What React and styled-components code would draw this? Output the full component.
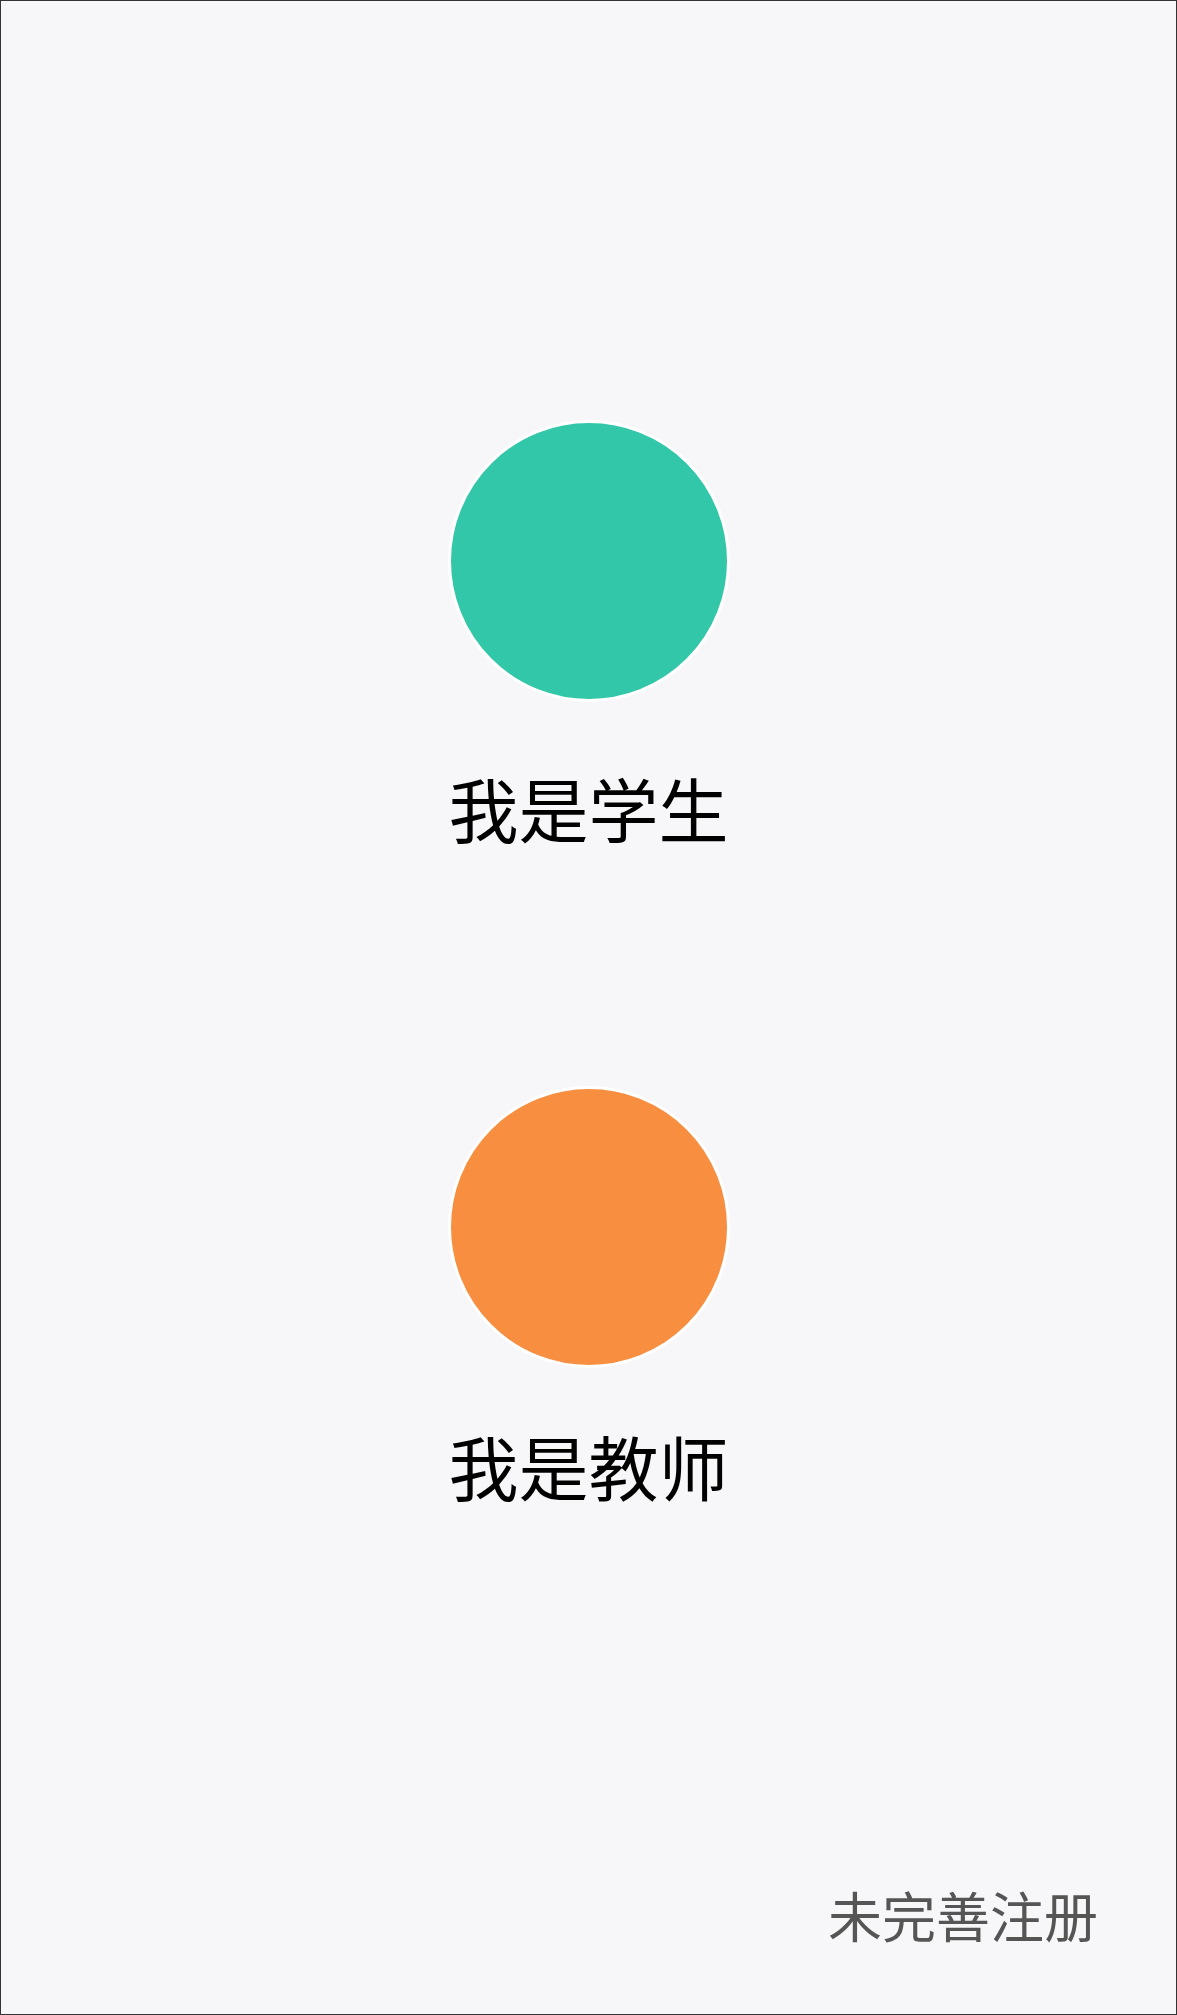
import React from "react";
import styled, { createGlobalStyle } from "styled-components";

const Global = createGlobalStyle`
  html, body { margin: 0; padding: 0; background: #f7f7fa; }
  * { box-sizing: border-box; }
`;

const Page = styled.div`
  width: 1177px;
  height: 2015px;
  border: 1px solid #333;
  background: #f7f7fa;
  display: flex;
  flex-direction: column;
  align-items: center;
  padding-top: 419px;
  font-family: "Noto Sans CJK SC", "Noto Sans", sans-serif;
`;

const Role = styled.div`
  display: flex;
  flex-direction: column;
  align-items: center;
  gap: ${(p) => p.$gap}px;
  & + & { margin-top: 243px; }
  cursor: pointer;
`;

const Circle = styled.div`
  width: 282px;
  height: 282px;
  border-radius: 50%;
  border: 3px solid #ffffff;
  background: ${(p) => p.$color};
`;

const Label = styled.div`
  font-size: 70px;
  line-height: 70px;
  font-weight: 400;
  color: #000;
`;

const Footer = styled.div`
  margin-top: auto;
  align-self: flex-end;
  margin-right: 78px;
  margin-bottom: 72px;
  font-size: 54px;
  line-height: 54px;
  color: #555;
`;

export default function App() {
  return (
    <>
      <Global />
      <Page>
        <Role $gap={71}>
          <Circle $color="#33c7aa" />
          <Label>我是学生</Label>
        </Role>
        <Role $gap={63}>
          <Circle $color="#f88f40" />
          <Label>我是教师</Label>
        </Role>
        <Footer>未完善注册</Footer>
      </Page>
    </>
  );
}
